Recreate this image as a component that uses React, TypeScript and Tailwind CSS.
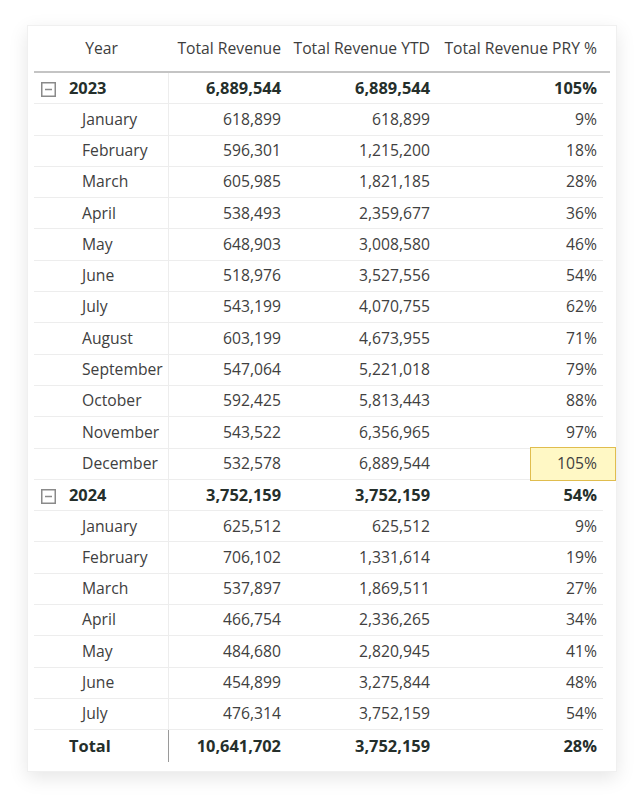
import React from 'react';

type Row = { kind: 'year' | 'month' | 'total'; label: string; rev: string; ytd: string; pry: string; highlight?: boolean };

const rows: Row[] = [
  { kind: 'year', label: '2023', rev: '6,889,544', ytd: '6,889,544', pry: '105%' },
  { kind: 'month', label: 'January', rev: '618,899', ytd: '618,899', pry: '9%' },
  { kind: 'month', label: 'February', rev: '596,301', ytd: '1,215,200', pry: '18%' },
  { kind: 'month', label: 'March', rev: '605,985', ytd: '1,821,185', pry: '28%' },
  { kind: 'month', label: 'April', rev: '538,493', ytd: '2,359,677', pry: '36%' },
  { kind: 'month', label: 'May', rev: '648,903', ytd: '3,008,580', pry: '46%' },
  { kind: 'month', label: 'June', rev: '518,976', ytd: '3,527,556', pry: '54%' },
  { kind: 'month', label: 'July', rev: '543,199', ytd: '4,070,755', pry: '62%' },
  { kind: 'month', label: 'August', rev: '603,199', ytd: '4,673,955', pry: '71%' },
  { kind: 'month', label: 'September', rev: '547,064', ytd: '5,221,018', pry: '79%' },
  { kind: 'month', label: 'October', rev: '592,425', ytd: '5,813,443', pry: '88%' },
  { kind: 'month', label: 'November', rev: '543,522', ytd: '6,356,965', pry: '97%' },
  { kind: 'month', label: 'December', rev: '532,578', ytd: '6,889,544', pry: '105%', highlight: true },
  { kind: 'year', label: '2024', rev: '3,752,159', ytd: '3,752,159', pry: '54%' },
  { kind: 'month', label: 'January', rev: '625,512', ytd: '625,512', pry: '9%' },
  { kind: 'month', label: 'February', rev: '706,102', ytd: '1,331,614', pry: '19%' },
  { kind: 'month', label: 'March', rev: '537,897', ytd: '1,869,511', pry: '27%' },
  { kind: 'month', label: 'April', rev: '466,754', ytd: '2,336,265', pry: '34%' },
  { kind: 'month', label: 'May', rev: '484,680', ytd: '2,820,945', pry: '41%' },
  { kind: 'month', label: 'June', rev: '454,899', ytd: '3,275,844', pry: '48%' },
  { kind: 'month', label: 'July', rev: '476,314', ytd: '3,752,159', pry: '54%' },
  { kind: 'total', label: 'Total', rev: '10,641,702', ytd: '3,752,159', pry: '28%' },
];

const cols = 'grid grid-cols-[135px_116px_149px_169px]';

function CollapseIcon() {
  return (
    <svg width="15" height="15" viewBox="0 0 15 15" className="shrink-0 mt-[3px]">
      <rect x="0.75" y="0.75" width="13.5" height="13.5" fill="white" stroke="#8a8a8a" strokeWidth="1.5" />
      <line x1="4" y1="7.5" x2="11" y2="7.5" stroke="#8a8a8a" strokeWidth="1.5" />
    </svg>
  );
}

export default function App() {
  return (
    <div className="w-[643px] h-[800px] bg-white pt-[25px] pl-[27px]" style={{ fontFamily: '"Open Sans", "Noto Sans", sans-serif' }}>
      <div className="w-[590px] h-[747px] bg-white border border-[#f0f0f0] shadow-[0_6px_18px_rgba(0,0,0,0.10)] px-[6px]">
        <div className={`${cols} h-[47px] items-center border-b-2 border-[#c4c4c4] text-[15.7px] text-[#3d3d3d]`}>
          <div className="text-center">Year</div>
          <div className="text-right pr-[4px]">Total Revenue</div>
          <div className="text-right pr-[4px]">Total Revenue YTD</div>
          <div className="text-right pr-[6px]">Total Revenue PRY %</div>
        </div>
        {rows.map((r, i) => {
          const bold = r.kind !== 'month';
          const tone = bold ? 'font-bold text-[16.4px] text-[#252f2b]' : 'text-[15.7px] text-[#404040]';
          const border = r.kind === 'total' ? '' : 'border-b border-[#ededed]';
          return (
            <div key={i} className={`${cols} h-[31.3px] items-center ${tone}`}>
              <div className={`h-full flex items-center border-r border-[#9a9a9a] ${border} ${r.kind === 'year' ? 'pl-[7px] gap-[13px]' : r.kind === 'month' ? 'pl-[48px]' : 'pl-[35px]'}`}>
                {r.kind === 'year' && <CollapseIcon />}
                <span>{r.label}</span>
              </div>
              <div className={`h-full flex items-center justify-end pr-[4px] ${border}`}>{r.rev}</div>
              <div className={`h-full flex items-center justify-end pr-[4px] ${border}`}>{r.ytd}</div>
              <div className={`relative h-full flex items-center justify-end pr-[6px] ${border}`}>
                {r.highlight && (
                  <div className="absolute left-[96px] w-[86px] top-[-2px] bottom-[-2px] bg-[#fff8c5] border border-[#e0bd4e]" />
                )}
                <span className="relative">{r.pry}</span>
              </div>
            </div>
          );
        })}
      </div>
    </div>
  );
}
